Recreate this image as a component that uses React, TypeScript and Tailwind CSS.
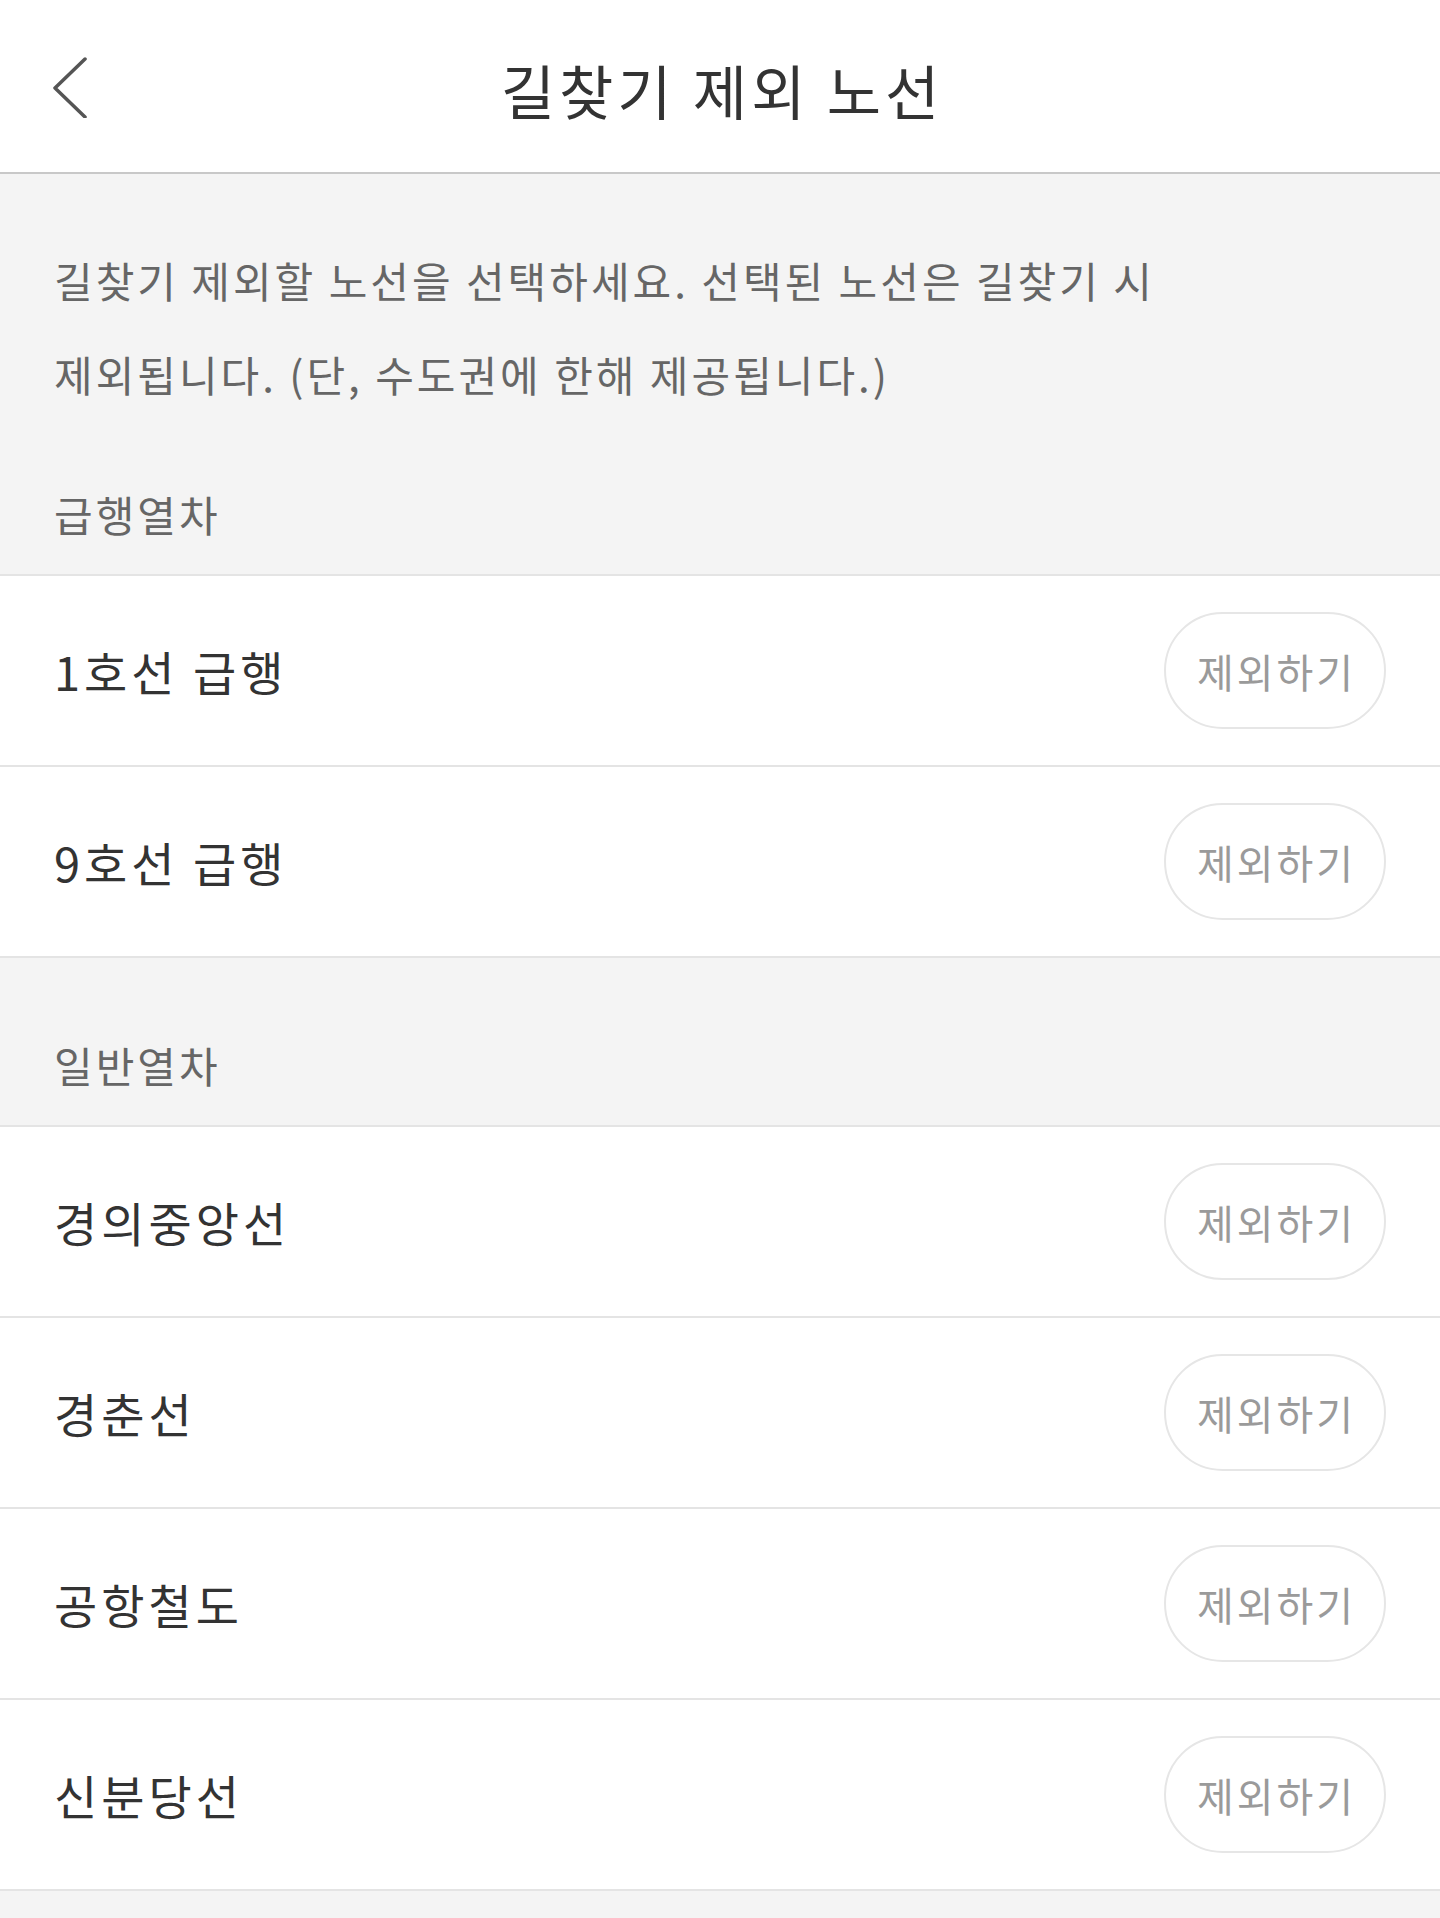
import React from "react";

const FONT = { fontFamily: '"Noto Sans CJK KR", "Noto Sans", sans-serif' };

function Row({ name }: { name: string }) {
  return (
    <div className="flex h-[191px] items-center justify-between border-b-2 border-[#e4e4e4] bg-white pl-[54px] pr-[54px]">
      <span className="text-[47px] leading-none tracking-[4px] text-[#333333]">{name}</span>
      <button className="flex h-[117px] w-[222px] items-center justify-center rounded-full border-2 border-[#e6e6e6] bg-white pl-[3px] text-[40px] leading-none tracking-[3px] text-[#9a9a9a]">
        제외하기
      </button>
    </div>
  );
}

function SectionHeader({ title, pt, pb }: { title: string; pt: string; pb: string }) {
  return (
    <div className={`border-b-2 border-[#e4e4e4] px-[54px] ${pt} ${pb}`}>
      <div className="text-[42px] leading-[42px] tracking-[3px] text-[#666666]">{title}</div>
    </div>
  );
}

export default function App() {
  return (
    <div style={FONT} className="min-h-[1918px] w-[1440px] bg-[#f4f4f4]">
      <header className="grid h-[174px] grid-cols-[1fr_auto_1fr] items-center border-b-2 border-[#c8c8c8] bg-white">
        <div className="pl-[50px]">
          <svg width="40" height="64" viewBox="0 0 40 64" fill="none">
            <path d="M35 5 L5 34 L35 63" stroke="#555555" strokeWidth="3.5" strokeLinecap="round" strokeLinejoin="round" />
          </svg>
        </div>
        <h1 className="pt-[6px] pl-[4px] text-[59px] font-normal leading-none tracking-[4px] text-[#333333]">길찾기 제외 노선</h1>
        <div />
      </header>
      <div className="bg-[#f4f4f4]">
        <p className="px-[54px] pt-[59px] text-[42px] leading-[94px] tracking-[3px] text-[#666666]">
          길찾기 제외할 노선을 선택하세요. 선택된 노선은 길찾기 시
          <br />
          제외됩니다. (단, 수도권에 한해 제공됩니다.)
        </p>
        <SectionHeader title="급행열차" pt="pt-[72px]" pb="pb-[39px]" />
        <Row name="1호선 급행" />
        <Row name="9호선 급행" />
        <SectionHeader title="일반열차" pt="pt-[86px]" pb="pb-[39px]" />
        <Row name="경의중앙선" />
        <Row name="경춘선" />
        <Row name="공항철도" />
        <Row name="신분당선" />
        <div className="h-[29px] bg-[#f4f4f4]" />
      </div>
    </div>
  );
}
